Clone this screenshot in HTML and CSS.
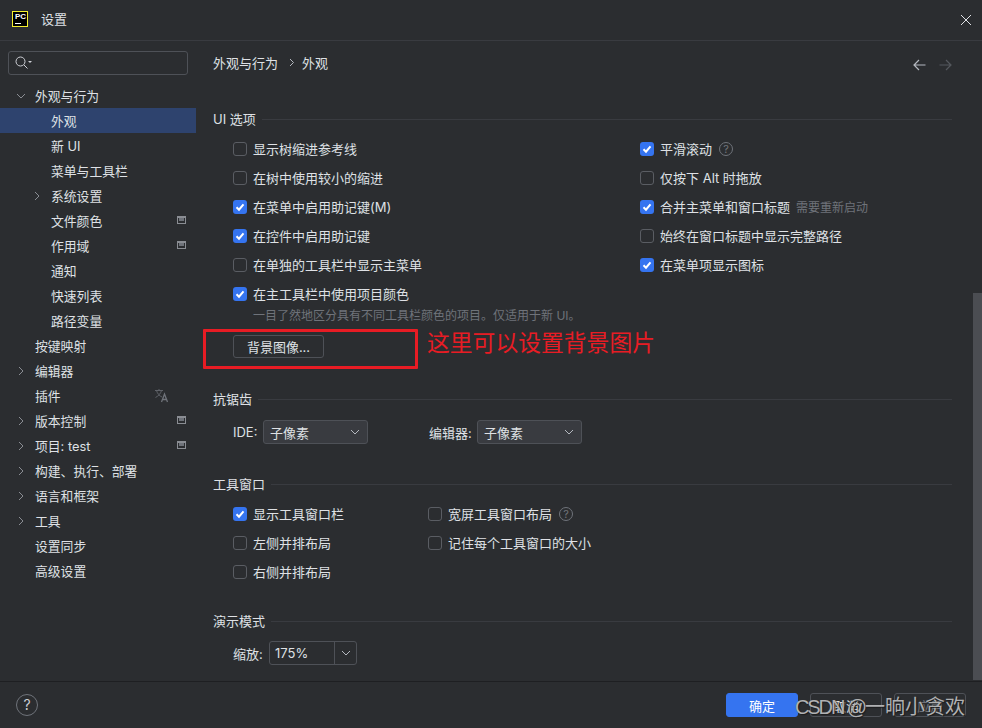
FILE: index.html
```html
<!DOCTYPE html>
<html lang="zh">
<head>
<meta charset="utf-8">
<title>设置</title>
<link rel="stylesheet" href="styles.css">
</head>
<body>
<div class="window">
  <header class="titlebar">
    <span class="logo"><span class="logo-text">PC</span><span class="logo-bar"></span></span>
    <span class="title">设置</span>
    <svg class="close" width="12" height="12" viewBox="0 0 12 12"><path d="M1 1l10 10M11 1L1 11" stroke="#dfe1e5" stroke-width="1" fill="none"/></svg>
  </header>
  <div class="content">
    <aside class="sidebar">
      <div class="search">
        <svg width="18" height="14" viewBox="0 0 18 14"><circle cx="5.5" cy="5.5" r="4.5" stroke="#ced0d6" fill="none"/><path d="M9 9l3.5 3.5" stroke="#ced0d6" fill="none"/><path d="M13 5h4l-2 2z" fill="#ced0d6"/></svg>
      </div>
      <nav class="tree">
        <div class="row"><svg class="chev" width="10" height="10" viewBox="0 0 10 10"><path d="M1 3l4 4 4-4" stroke="#8a8d93" fill="none"/></svg><span>外观与行为</span></div>
        <div class="row child selected"><span>外观</span></div>
        <div class="row child"><span>新 UI</span></div>
        <div class="row child"><span>菜单与工具栏</span></div>
        <div class="row child"><svg class="chev" width="10" height="10" viewBox="0 0 10 10"><path d="M3 1l4 4-4 4" stroke="#8a8d93" fill="none"/></svg><span>系统设置</span></div>
        <div class="row child"><span>文件颜色</span><i class="scope"></i></div>
        <div class="row child"><span>作用域</span><i class="scope"></i></div>
        <div class="row child"><span>通知</span></div>
        <div class="row child"><span>快速列表</span></div>
        <div class="row child"><span>路径变量</span></div>
        <div class="row"><span>按键映射</span></div>
        <div class="row"><svg class="chev" width="10" height="10" viewBox="0 0 10 10"><path d="M3 1l4 4-4 4" stroke="#8a8d93" fill="none"/></svg><span>编辑器</span></div>
        <div class="row"><span>插件</span><svg class="lang" width="15" height="15" viewBox="0 0 15 15"><path d="M1 2.5h8M5 1v1.5M2.5 2.5c.8 3 3 5.500 5.500 6.500M7.500 2.500c-.8 3-3 5.500-6 7" stroke="#5f6268" fill="none"/><path d="M7.500 14l3-8 3 8M8.700 11.500h3.800" stroke="#6f737a" stroke-width="1.300" fill="none"/></svg></div>
        <div class="row"><svg class="chev" width="10" height="10" viewBox="0 0 10 10"><path d="M3 1l4 4-4 4" stroke="#8a8d93" fill="none"/></svg><span>版本控制</span><i class="scope"></i></div>
        <div class="row"><svg class="chev" width="10" height="10" viewBox="0 0 10 10"><path d="M3 1l4 4-4 4" stroke="#8a8d93" fill="none"/></svg><span>项目: test</span><i class="scope"></i></div>
        <div class="row"><svg class="chev" width="10" height="10" viewBox="0 0 10 10"><path d="M3 1l4 4-4 4" stroke="#8a8d93" fill="none"/></svg><span>构建、执行、部署</span></div>
        <div class="row"><svg class="chev" width="10" height="10" viewBox="0 0 10 10"><path d="M3 1l4 4-4 4" stroke="#8a8d93" fill="none"/></svg><span>语言和框架</span></div>
        <div class="row"><svg class="chev" width="10" height="10" viewBox="0 0 10 10"><path d="M3 1l4 4-4 4" stroke="#8a8d93" fill="none"/></svg><span>工具</span></div>
        <div class="row"><span>设置同步</span></div>
        <div class="row"><span>高级设置</span></div>
      </nav>
    </aside>
    <main class="main">
      <div class="crumbs">
        <span>外观与行为</span>
        <svg class="crumb-sep" width="6" height="9" viewBox="0 0 6 9"><path d="M1 1l3.500 3.500L1 8" stroke="#b4b8bf" fill="none"/></svg>
        <span>外观</span>
        <span class="nav-arrows">
          <svg width="13" height="12" viewBox="0 0 13 12"><path d="M12.500 6H1M6 1L1 6l5 5" stroke="#b4b8bf" stroke-width="1.200" fill="none"/></svg>
          <svg width="13" height="12" viewBox="0 0 13 12"><path d="M.5 6H12M7 1l5 5-5 5" stroke="#55585e" stroke-width="1.200" fill="none"/></svg>
        </span>
      </div>

      <section class="sec sec-ui">
        <h2 class="sec-title"><span>UI 选项</span></h2>
        <div class="options ui-grid">
          <label class="opt"><i class="cb"></i>显示树缩进参考线</label>
          <label class="opt"><i class="cb on"><svg width="14" height="14" viewBox="0 0 14 14"><path d="M3.500 7.200l2.500 2.500 4.500-5.400" stroke="#fff" stroke-width="2" fill="none"/></svg></i>平滑滚动<i class="help">?</i></label>
          <label class="opt"><i class="cb"></i>在树中使用较小的缩进</label>
          <label class="opt"><i class="cb"></i>仅按下 Alt 时拖放</label>
          <label class="opt"><i class="cb on"><svg width="14" height="14" viewBox="0 0 14 14"><path d="M3.500 7.200l2.500 2.500 4.500-5.400" stroke="#fff" stroke-width="2" fill="none"/></svg></i>在菜单中启用助记键(M)</label>
          <label class="opt"><i class="cb on"><svg width="14" height="14" viewBox="0 0 14 14"><path d="M3.500 7.200l2.500 2.500 4.500-5.400" stroke="#fff" stroke-width="2" fill="none"/></svg></i>合并主菜单和窗口标题<span class="note">需要重新启动</span></label>
          <label class="opt"><i class="cb on"><svg width="14" height="14" viewBox="0 0 14 14"><path d="M3.500 7.200l2.500 2.500 4.500-5.400" stroke="#fff" stroke-width="2" fill="none"/></svg></i>在控件中启用助记键</label>
          <label class="opt"><i class="cb"></i>始终在窗口标题中显示完整路径</label>
          <label class="opt"><i class="cb"></i>在单独的工具栏中显示主菜单</label>
          <label class="opt"><i class="cb on"><svg width="14" height="14" viewBox="0 0 14 14"><path d="M3.500 7.200l2.500 2.500 4.500-5.400" stroke="#fff" stroke-width="2" fill="none"/></svg></i>在菜单项显示图标</label>
          <label class="opt"><i class="cb on"><svg width="14" height="14" viewBox="0 0 14 14"><path d="M3.500 7.200l2.500 2.500 4.500-5.400" stroke="#fff" stroke-width="2" fill="none"/></svg></i>在主工具栏中使用项目颜色</label>
        </div>
        <p class="hint">一目了然地区分具有不同工具栏颜色的项目。仅适用于新 UI。</p>
        <div class="bg-row">
          <button class="btn bg-btn" type="button">背景图像...</button>
          <span class="red-box"></span>
          <span class="red-text">这里可以设置背景图片</span>
        </div>
      </section>

      <section class="sec sec-aa">
        <h2 class="sec-title"><span>抗锯齿</span></h2>
        <div class="aa-row">
          <span class="aa-l1">IDE:</span>
          <span class="select">子像素<svg width="10" height="6" viewBox="0 0 10 6"><path d="M1 1l4 4 4-4" stroke="#b4b8bf" fill="none"/></svg></span>
          <span class="aa-l2">编辑器:</span>
          <span class="select">子像素<svg width="10" height="6" viewBox="0 0 10 6"><path d="M1 1l4 4 4-4" stroke="#b4b8bf" fill="none"/></svg></span>
        </div>
      </section>

      <section class="sec sec-tw">
        <h2 class="sec-title"><span>工具窗口</span></h2>
        <div class="options tw-grid">
          <label class="opt"><i class="cb on"><svg width="14" height="14" viewBox="0 0 14 14"><path d="M3.500 7.200l2.500 2.500 4.500-5.400" stroke="#fff" stroke-width="2" fill="none"/></svg></i>显示工具窗口栏</label>
          <label class="opt"><i class="cb"></i>宽屏工具窗口布局<i class="help">?</i></label>
          <label class="opt"><i class="cb"></i>左侧并排布局</label>
          <label class="opt"><i class="cb"></i>记住每个工具窗口的大小</label>
          <label class="opt"><i class="cb"></i>右侧并排布局</label>
        </div>
      </section>

      <section class="sec sec-demo">
        <h2 class="sec-title"><span>演示模式</span></h2>
        <div class="zoom-row">
          <span class="zoom-label">缩放:</span>
          <span class="combo"><span class="combo-val">175%</span><span class="combo-arrow"><svg width="10" height="6" viewBox="0 0 10 6"><path d="M1 1l4 4 4-4" stroke="#b4b8bf" fill="none"/></svg></span></span>
        </div>
      </section>
      <div class="scrollbar"></div>
    </main>
  </div>
  <footer class="footer">
    <span class="help-round">?</span>
    <span class="footer-btns">
      <button class="btn primary" type="button">确定</button>
      <button class="btn" type="button">取消</button>
      <button class="btn dim" type="button">应用</button>
    </span>
    <span class="watermark"><span class="wm-latin">CSDN @</span>一晌小贪欢</span>
  </footer>
</div>
</body>
</html>
```

FILE: styles.css
```css
* { box-sizing: border-box; }
html, body { margin: 0; padding: 0; }
body {
  width: 982px;
  height: 728px;
  overflow: hidden;
  background: #2b2d30;
  color: #dfe1e5;
  font-family: Inter, "Noto Sans CJK SC", sans-serif;
  font-size: 13px;
}
.window { display: flex; flex-direction: column; width: 982px; height: 728px; position: relative; }

.titlebar {
  height: 41px;
  flex: none;
  display: flex;
  align-items: center;
  padding: 0 10px 2px 12px;
  border-bottom: 1px solid #393b40;
}
.logo {
  width: 16px; height: 16px;
  background: #000;
  border: 1px solid #f5f02e;
  display: flex; flex-direction: column;
  padding: 1px 0 0 2px;
  flex: none;
}
.logo-text { font: 700 8px/8px "Liberation Sans", sans-serif; color: #fff; letter-spacing: -0.2px; }
.logo-bar { width: 6px; height: 1px; background: #fff; margin-top: 2px; }
.title { margin: 0 0 2px 13px; font-size: 13px; }
.close { margin: 2px 0 0 auto; }

.content { flex: 1; display: flex; min-height: 0; }

.sidebar { width: 196px; flex: none; padding-top: 10px; font-size: 12.8px; }
.search {
  margin-left: 8px;
  width: 180px; height: 24px;
  border: 1px solid #4e5157;
  border-radius: 3px;
  display: flex; align-items: center;
  padding-left: 6px;
}
.tree { margin-top: 8px; }
.row {
  height: 25px;
  display: flex;
  align-items: center;
  padding: 0 0 1px 35px;
  position: relative;
  white-space: nowrap;
}
.row.child { padding-left: 51px; }
.row.selected { background: #2e436e; }
.chev { position: absolute; left: 16px; top: 8px; }
.row.child .chev { left: 32px; }
.scope {
  position: absolute; left: 177px; top: 8px;
  width: 9px; height: 8px;
  border: 1px solid #8a8d93;
  border-top-width: 2px;
  background: #2b2d30;
}
.scope::after { content: ""; display: block; width: 5px; height: 3px; margin: 0 1px; background: #6f737a; }
.lang { position: absolute; left: 154px; top: 5px; }

.main { flex: 1; min-width: 0; position: relative; padding: 11px 30px 0 17px; overflow: hidden; }

.crumbs { height: 20px; display: flex; align-items: center; }
.crumb-sep { margin: 0 7px 0 11px; }
.nav-arrows { margin-left: auto; display: flex; gap: 13px; margin-top: 6px; }

.sec-title {
  margin: 0;
  height: 20px;
  font: inherit;
  display: flex;
  align-items: center;
  gap: 6px;
}
.sec-title::after { content: ""; flex: 1; height: 1px; background: #393b40; margin-top: 3px; }

.sec-ui { margin-top: 36px; }
.sec-aa { margin-top: 30px; }
.sec-tw { margin-top: 29px; }
.sec-demo { margin-top: 24px; }

.options { display: grid; margin: 6px 0 0 20px; }
.ui-grid { grid-template-columns: 407px 1fr; }
.tw-grid { grid-template-columns: 195px 1fr; }
.opt { height: 29px; display: flex; align-items: center; white-space: nowrap; }
.cb {
  width: 14px; height: 14px;
  flex: none;
  margin-right: 6px;
  border: 1px solid #5a5d63;
  border-radius: 3px;
  display: block;
}
.cb.on { background: #3574f0; border: 0; }
.cb svg { display: block; }
.help {
  width: 14px; height: 14px;
  margin-left: 7px;
  border: 1px solid #6f737a;
  border-radius: 50%;
  color: #6f737a;
  font: 11px/12px Inter, sans-serif;
  text-align: center;
}
.note { margin-left: 6px; color: #6f737a; font-size: 12px; }
.hint { margin: 0 0 0 40px; height: 16px; line-height: 16px; font-size: 12px; color: #6f737a; white-space: nowrap; }

.bg-row { position: relative; margin: 11px 0 0 20px; height: 23px; }
.btn {
  width: 72px; height: 24px;
  padding: 0;
  border: 1px solid #4e5157;
  border-radius: 3px;
  background: transparent;
  color: #dfe1e5;
  font: 13px Inter, "Noto Sans CJK SC", sans-serif;
}
.bg-btn { width: 91px; height: 23px; display: block; }
.red-box {
  position: absolute; left: -30px; top: -6px;
  width: 215px; height: 40px;
  border: 3px solid #e81c24;
  border-radius: 1px;
}
.red-text {
  position: absolute; left: 194px; top: -7px;
  font-size: 22.8px; line-height: 30px;
  color: #e81c24;
  white-space: nowrap;
}

.aa-row { display: flex; align-items: center; margin: 12px 0 0 20px; height: 24px; }
.aa-l1 { width: 30px; }
.aa-l2 { margin-left: 61px; width: 48px; }
.select {
  width: 105px; height: 24px;
  display: flex; align-items: center; justify-content: space-between;
  padding: 0 7px 0 6px;
  background: #393b40;
  border: 1px solid #4e5157;
  border-radius: 3px;
}

.zoom-row { display: flex; align-items: center; margin: 11px 0 0 20px; height: 24px; }
.zoom-label { width: 36px; }
.combo {
  width: 88px; height: 24px;
  display: flex;
  border: 1px solid #4e5157;
  border-radius: 3px;
}
.combo-val { flex: 1; padding-left: 5px; line-height: 22px; }
.combo-arrow { width: 22px; border-left: 1px solid #4e5157; display: flex; align-items: center; justify-content: center; }

.scrollbar { position: absolute; right: 0; top: 252px; width: 9px; height: 387px; background: #4b4d52; }

.footer {
  height: 47px;
  flex: none;
  display: flex;
  align-items: center;
  padding: 0 16px 0 16px;
  border-top: 1px solid #1e1f22;
  position: relative;
}
.help-round {
  width: 22px; height: 22px;
  border: 1px solid #6f737a;
  border-radius: 50%;
  text-align: center;
  line-height: 20px;
  font-size: 14px;
  color: #ced0d6;
}
.footer-btns { margin-left: auto; display: flex; gap: 12px; }
.primary { background: #3574f0; border-color: #3574f0; color: #fff; }
.dim { color: #6f737a; }
.watermark {
  position: absolute; left: 795px; top: 12px;
  font: 20px/26px "Liberation Sans", "Noto Sans CJK SC", sans-serif;
  color: #b0b1b3;
  text-shadow: 1px 1px 1px #1a1b1d;
  white-space: nowrap;
}
.wm-latin { letter-spacing: -2.1px; }
```
